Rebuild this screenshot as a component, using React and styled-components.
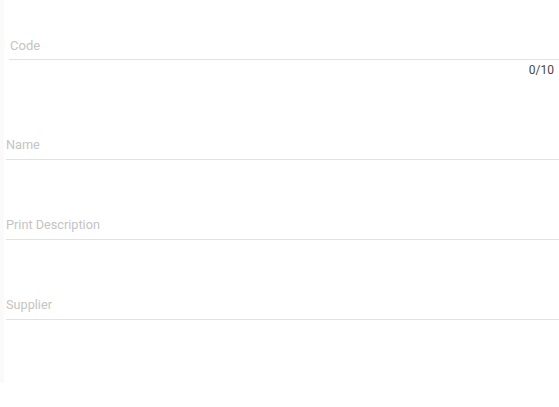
import React from "react";
import styled, { createGlobalStyle } from "styled-components";

const GlobalStyle = createGlobalStyle`
  html, body {
    margin: 0;
    padding: 0;
    background: #ffffff;
    font-family: Roboto, "Liberation Sans", Arial, sans-serif;
  }
`;

const Page = styled.div`
  display: flex;
  width: 559px;
  height: 407px;
  overflow: hidden;
`;

const Strip = styled.div`
  width: 4px;
  height: 383px;
  background: #fafafa;
  flex-shrink: 0;
`;

const Form = styled.div`
  flex: 1;
  display: flex;
  flex-direction: column;
  padding-left: 2px;
`;

const CodeField = styled.div`
  margin-left: 3px;
  padding-top: 38px;
  display: flex;
  flex-direction: column;
`;

const Field = styled.div`
  margin-top: ${({ $gap }) => $gap}px;
  display: flex;
  flex-direction: column;
`;

const Label = styled.div`
  font-size: ${({ $size }) => $size || 12.7}px;
  line-height: 16px;
  color: #c4c4c4;
  padding-left: ${({ $indent }) => $indent || 0}px;
  padding-bottom: ${({ $pad }) => $pad}px;
  border-bottom: 1px solid #e2e2e2;
`;

const Counter = styled.div`
  margin-top: 3px;
  align-self: flex-end;
  padding-right: 5px;
  font-size: 12px;
  line-height: 15px;
  color: #474747;
`;

const fields = ["Name", "Print Description", "Supplier"];

const App = () => {
  return (
    <>
      <GlobalStyle />
      <Page>
        <Strip />
        <Form>
          <CodeField>
            <Label $size={13} $indent={1} $pad={5}>
              Code
            </Label>
            <Counter>0/10</Counter>
          </CodeField>
          {fields.map((name, i) => (
            <Field key={name} $gap={i === 0 ? 59 : 57}>
              <Label $pad={6}>{name}</Label>
            </Field>
          ))}
        </Form>
      </Page>
    </>
  );
};

export default App;
